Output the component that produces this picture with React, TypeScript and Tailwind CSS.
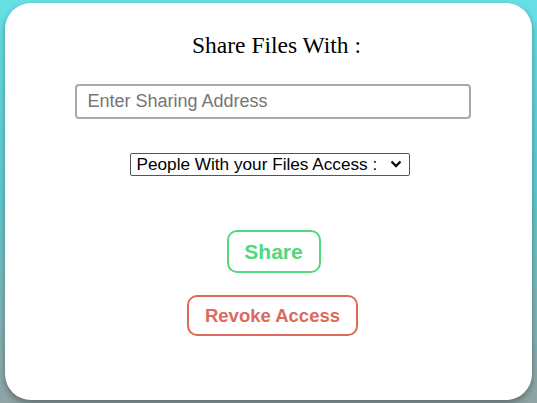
export default function App() {
  return (
    <div className="h-[403px] w-full bg-gradient-to-b from-[#66e0e6] via-[#5fc9cf] to-[#8fa3a3] px-[5px] pt-[3px]">
      <div className="flex h-[397px] flex-col items-center rounded-[26px] bg-white shadow-[0_3px_6px_rgba(0,0,0,0.35)]">
        <h2 className="ml-[16px] mt-[28px] font-['Liberation_Serif',serif] text-[23.5px] leading-[28px] text-black">
          Share Files With :
        </h2>
        <input
          type="text"
          placeholder="Enter Sharing Address"
          className="ml-[8px] mt-[25px] h-[35px] w-[396px] rounded-[4px] border-2 border-[#a9a9a9] px-[11px] font-['Liberation_Sans',sans-serif] text-[18px] text-black outline-none placeholder:text-[#757575]"
        />
        <div className="relative ml-[2px] mt-[33px]">
          <select className="h-[23px] w-[280px] appearance-none rounded-[2px] border border-[#555] bg-white pl-[6px] font-['Liberation_Sans',sans-serif] text-[17.2px] leading-[21px] text-black">
            <option>People With your Files Access :</option>
          </select>
          <svg
            className="pointer-events-none absolute right-[8px] top-[8px]"
            width="12"
            height="8"
            viewBox="0 0 12 8"
            fill="none"
          >
            <path d="M1.5 1.5 L6 6 L10.5 1.5" stroke="#111" strokeWidth="2.4" />
          </svg>
        </div>
        <button className="ml-[10px] mt-[54px] h-[43px] w-[94px] rounded-[10px] border-2 border-[#4fd87c] font-['Liberation_Sans',sans-serif] text-[21px] font-bold text-[#4fd87c]">
          Share
        </button>
        <button className="ml-[8px] mt-[22px] h-[41px] w-[171px] rounded-[10px] border-2 border-[#dc6a5d] font-['Liberation_Sans',sans-serif] text-[18.5px] font-bold text-[#dc6a5d]">
          Revoke Access
        </button>
      </div>
    </div>
  );
}
